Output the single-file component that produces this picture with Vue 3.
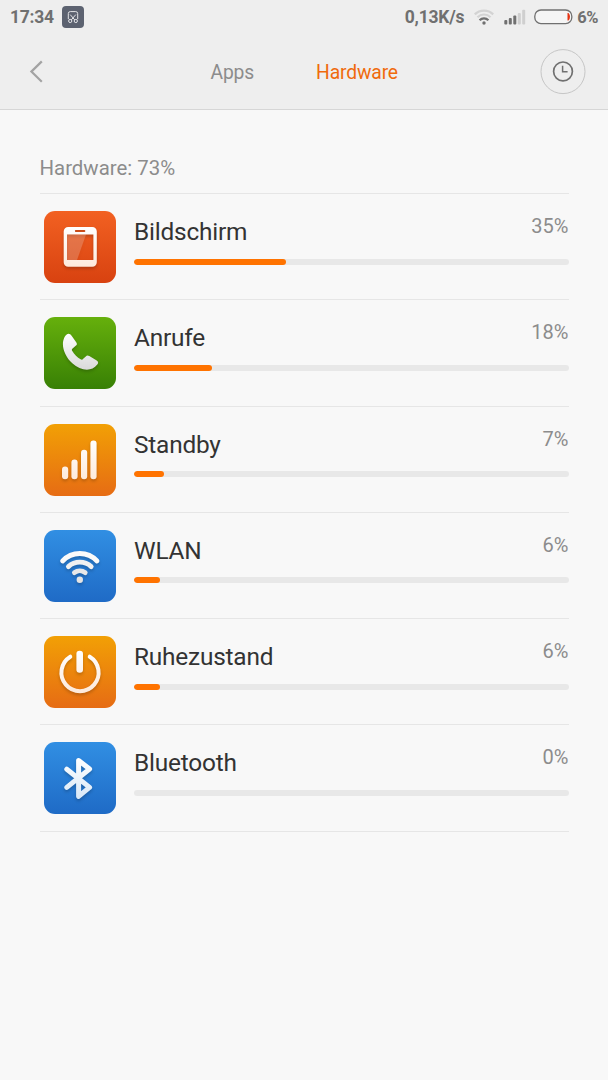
<script setup>
// 硬件耗电列表
const list = [
    { id: "screen", name: "Bildschirm", rate: 35, color: "red" },
    { id: "call", name: "Anrufe", rate: 18, color: "green" },
    { id: "standby", name: "Standby", rate: 7, color: "orange" },
    { id: "wlan", name: "WLAN", rate: 6, color: "blue" },
    { id: "power", name: "Ruhezustand", rate: 6, color: "orange" },
    { id: "bluetooth", name: "Bluetooth", rate: 0, color: "blue" },
]
</script>
<template>
    <div class="page">
        <!-- 状态栏 -->
        <div class="status">
            <span class="time">17:34</span>
            <svg class="shot" width="22" height="22" viewBox="0 0 22 22">
                <rect width="22" height="22" rx="4" fill="#5c6270" />
                <g fill="none" stroke="#e4e5e8" stroke-width="1">
                    <path d="M6.3 13.2V7.6q0-2 2-2h5.4q2 0 2 2v5.6M8.2 8.6l4.6 5.4M13.8 8.6l-4.6 5.4" />
                    <circle cx="8.2" cy="15" r="1.6" />
                    <circle cx="13.8" cy="15" r="1.6" />
                </g>
            </svg>
            <span class="speed">0,13K/s</span>
            <svg class="wifi" width="20" height="16" viewBox="0 0 20 16" fill="none" stroke-width="2.2">
                <path d="M.8 5.4a13 13 0 0 1 18.4 0" stroke="#d3d3d3" />
                <path d="M3.5 8.2a9.2 9.2 0 0 1 13 0" stroke="#d3d3d3" />
                <path d="M5.6 11.2a6.2 6.2 0 0 1 8.8 0" stroke="#707070" />
                <circle cx="10" cy="14" r="1.7" fill="#707070" />
            </svg>
            <svg class="signal" width="22" height="16" viewBox="0 0 22 16">
                <rect x=".3" y="11" width="3" height="4.4" rx="1" fill="#707070" />
                <rect x="4.8" y="9" width="3" height="6.4" rx="1" fill="#707070" />
                <rect x="9.3" y="6.6" width="3" height="8.8" rx="1" fill="#707070" />
                <rect x="13.8" y="4" width="3" height="11.4" rx="1" fill="#cfcfcf" />
                <rect x="18.2" y=".8" width="3" height="14.6" rx="1" fill="#cfcfcf" />
            </svg>
            <svg class="battery" width="39" height="16" viewBox="0 0 39 16">
                <rect x=".8" y="1" width="37" height="13.6" rx="6.2" fill="#f5f5f5" stroke="#707070" stroke-width="1.3" />
                <path d="M33.5 4h1q1.5 1.5 1.5 3.8t-1.5 3.8h-1z" fill="#e63312" />
            </svg>
            <span class="level">6%</span>
        </div>
        <!-- 导航 -->
        <div class="nav">
            <svg class="back" width="16" height="24" viewBox="0 0 16 24">
                <path d="M13.8 1.4 3.4 11.6l10.4 10.2" fill="none" stroke="#a3a3a3" stroke-width="2.2" />
            </svg>
            <span class="tab">Apps</span>
            <span class="tab active">Hardware</span>
            <svg class="history" width="46" height="46" viewBox="0 0 46 46" fill="none">
                <circle cx="23" cy="22.6" r="22" stroke="#c6c6c6" />
                <circle cx="23" cy="22.4" r="9.4" stroke="#707070" stroke-width="1.7" />
                <path d="M22.6 16.8v6h5" stroke="#707070" stroke-width="1.5" />
            </svg>
        </div>
        <!-- 列表 -->
        <div class="content">
            <div class="total">Hardware: 73%</div>
            <div v-for="item in list" :key="item.id" class="row">
                <div class="icon" :class="item.color">
                    <svg width="72" height="72" viewBox="0 0 72 72">
                        <defs>
                            <linearGradient :id="'white-' + item.id" gradientUnits="userSpaceOnUse" x1="0" y1="16" x2="0" y2="56">
                                <stop offset="0" stop-color="#fff" />
                                <stop offset="1" :stop-color="item.color === 'green' ? '#d6d6d6' : item.color === 'blue' ? '#d9e8f7' : '#fdeadb'" />
                            </linearGradient>
                        </defs>
                        <g v-if="item.id === 'screen'">
                            <path fill-rule="evenodd" :fill="`url(#white-${item.id})`" d="M24.2 16h24.1a4.5 4.5 0 0 1 4.5 4.5v30.7a4.5 4.5 0 0 1-4.5 4.5H24.2a4.5 4.5 0 0 1-4.5-4.5V20.5a4.5 4.5 0 0 1 4.5-4.5zM23 23.5V49h26.4V23.5zM31.8 19a.9.9 0 0 0 0 1.9h8.6a.9.9 0 0 0 0-1.9z" />
                            <path d="M23 23.5h19L33 49H23z" fill="#fff" fill-opacity=".2" />
                        </g>
                        <path v-else-if="item.id === 'call'" :fill="`url(#white-${item.id})`" d="M24.6 16.7c1.2 0 2.2.8 3 2l4.6 6.5c1 1.5.9 2.4-.2 3.4l-3.4 2.8c-1 .8-.9 1.6-.3 2.6 2 3.4 5 6.3 8.3 8.3 1 .6 1.9.5 2.6-.5l2.6-2.4c1-1.1 2-1.2 3.5-.3l7 4.2c2.3 1.5 2.2 2.7 1 4.3-2.7 3.6-6.4 5.1-10.4 5.1-4.8 0-10.1-2.5-14.6-6.4-5.6-5-9.4-12.7-9.4-19.1 0-5.1 2.6-10.5 5.7-10.5z" />
                        <g v-else-if="item.id === 'standby'" :fill="`url(#white-${item.id})`">
                            <rect x="18" y="42.6" width="6.2" height="12.6" rx="3" />
                            <rect x="27.4" y="35.6" width="6.2" height="19.6" rx="3" />
                            <rect x="37" y="25.8" width="6.2" height="29.4" rx="3" />
                            <rect x="46.4" y="16.6" width="6.2" height="38.6" rx="3" />
                        </g>
                        <g v-else-if="item.id === 'wlan'" fill="none" stroke-linecap="round" stroke-width="4.8" stroke="#f1f1f1">
                            <path d="M18.6 31a23.5 23.5 0 0 1 34.4 0" stroke="#fafafa" />
                            <path d="M24.4 36.6a17 17 0 0 1 22.8 0" />
                            <path d="M30.4 42.7a8.6 8.6 0 0 1 10.8 0" stroke="#e8e8e8" />
                            <circle cx="35.8" cy="49.8" r="3.2" fill="#e4e4e4" stroke="none" />
                        </g>
                        <g v-else-if="item.id === 'power'" fill="none" stroke-linecap="round" :stroke="`url(#white-${item.id})`">
                            <path d="M26.3 20.7a18.6 18.6 0 1 0 19.4 0" stroke-width="4" />
                            <rect x="32.4" y="14.8" width="6.6" height="22" rx="3.2" :fill="`url(#white-${item.id})`" stroke="none" />
                        </g>
                        <path v-else fill="none" :stroke="`url(#white-${item.id})`" stroke-width="5" stroke-linecap="round" stroke-linejoin="round" d="M22.8 27.2 45.6 45.4 34.6 54.4V18.6L45.6 27 22.8 45.4" />
                    </svg>
                </div>
                <div class="desc">
                    <div class="text">
                        <span class="name">{{ item.name }}</span>
                        <span class="rate">{{ item.rate }}%</span>
                    </div>
                    <div class="bar">
                        <div v-if="item.rate" class="inner" :style="{ width: item.rate + '%' }"></div>
                    </div>
                </div>
            </div>
        </div>
    </div>
</template>
<style>
body{
    background-color: #f8f8f8;
}
</style>
<style scoped>
.page{
    min-height: 1080px;
    background-color: #f8f8f8;
    font-family: Roboto, sans-serif;
}
/* 状态栏 */
.status{
    display: flex;
    align-items: center;
    box-sizing: border-box;
    height: 34px;
    padding: 0 10px;
    background-color: #eee;
    color: #707070;
    font-size: 17.5px;
    font-weight: bold;
    letter-spacing: -0.25px;
    white-space: nowrap;
}
.shot{
    margin-left: 8px;
}
.speed{
    margin-left: auto;
}
.wifi{
    margin-left: 10px;
}
.signal{
    margin-left: 10px;
}
.battery{
    margin: 0 4px 0 8px;
}
.level{
    font-size: 16.5px;
    letter-spacing: -0.4px;
}
/* 导航 */
.nav{
    display: flex;
    align-items: center;
    box-sizing: border-box;
    height: 76px;
    padding: 0 22px 0 28px;
    background-color: #eee;
    border-bottom: 1px solid #d6d6d6;
}
.tab{
    margin-left: 166.5px;
    padding-top: 1px;
    color: #8c8c8c;
    font-size: 19.3px;
    letter-spacing: -0.15px;
}
.active{
    margin-left: 62px;
    color: #f06a0c;
}
.history{
    margin-left: auto;
}
/* 列表 */
.content{
    padding: 0 39.5px;
}
.total{
    box-sizing: border-box;
    height: 84px;
    padding-top: 45.5px;
    border-bottom: 1px solid #e6e6e6;
    color: #8c8c8c;
    font-size: 20.4px;
    line-height: 24px;
}
.row{
    display: flex;
    box-sizing: border-box;
    height: 106.3px;
    padding: 17px 0 0 4.5px;
    border-bottom: 1px solid #e6e6e6;
}
.icon{
    width: 72px;
    height: 72px;
    border-radius: 11px;
}
.icon svg{
    display: block;
    filter: drop-shadow(0 2px 1.5px rgba(0,0,0,.2));
}
.red{
    background-image: linear-gradient(#f26122, #d84210);
}
.green{
    background-image: linear-gradient(#66b00c, #388005);
}
.orange{
    background-image: linear-gradient(#f2a005, #e66c14);
}
.blue{
    background-image: linear-gradient(#318fe3, #1f6bc6);
}
.desc{
    flex: auto;
    margin-left: 18px;
}
.text{
    display: flex;
    justify-content: space-between;
    height: 47.5px;
}
.name{
    margin-top: 7px;
    color: #333;
    font-size: 24.4px;
    line-height: 28px;
    letter-spacing: -0.2px;
}
.rate{
    margin-top: 3px;
    color: #8c8c8c;
    font-size: 20px;
    line-height: 24px;
}
/* 进度条 */
.bar{
    height: 6px;
    border-radius: 3px;
    background-color: #e8e8e8;
    overflow: hidden;
}
.inner{
    height: 100%;
    border-radius: 3px;
    background-color: #ff7300;
}
</style>
